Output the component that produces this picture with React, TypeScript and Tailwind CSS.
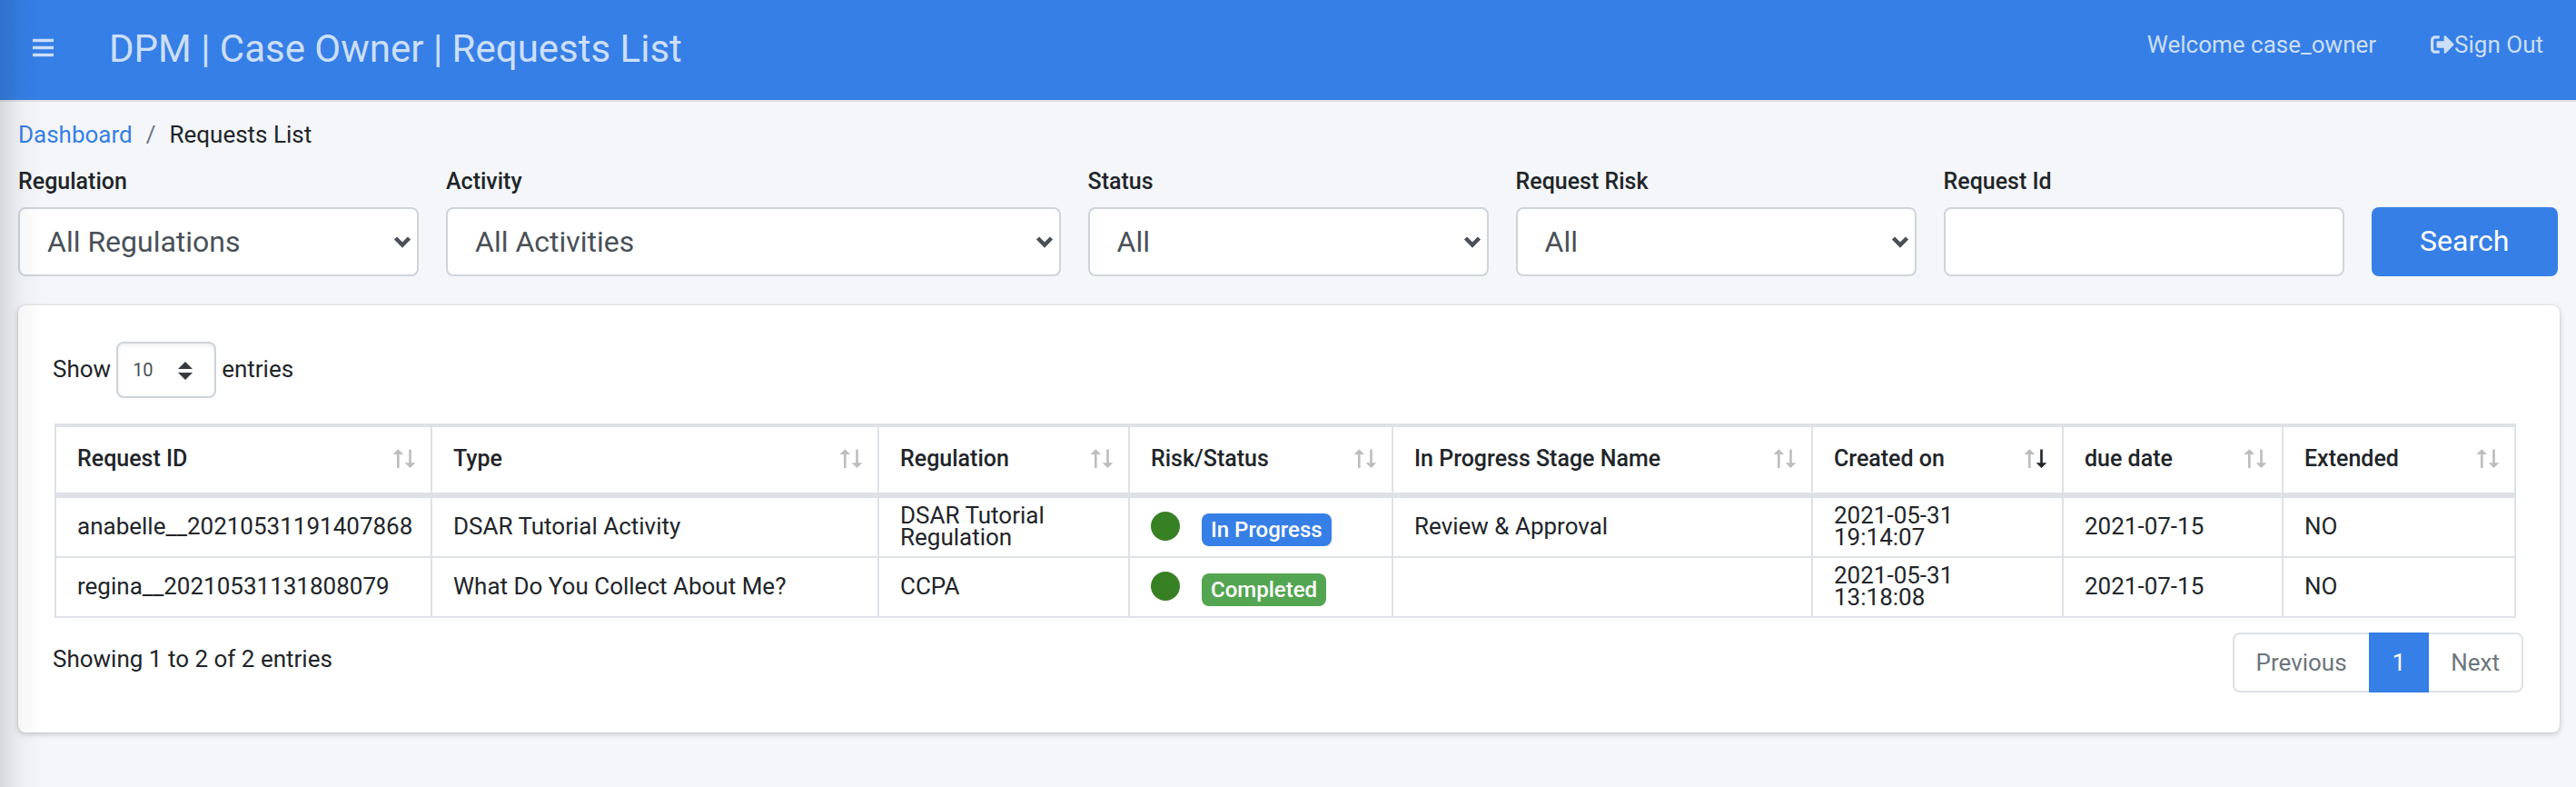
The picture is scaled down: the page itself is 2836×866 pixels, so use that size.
import { FaSignOutAlt } from "react-icons/fa";

const regulations = ["All Regulations", "CCPA", "DSAR Tutorial Regulation"];
const activities = ["All Activities", "DSAR Tutorial Activity", "What Do You Collect About Me?"];
const statuses = ["All", "In Progress", "Completed"];
const risks = ["All", "Low", "Medium", "High"];

type Column = { title: string; width: string; sorted?: boolean };

const columns: Column[] = [
  { title: "Request ID", width: "w-[414px]" },
  { title: "Type", width: "w-[492px]" },
  { title: "Regulation", width: "w-[276px]" },
  { title: "Risk/Status", width: "w-[290px]" },
  { title: "In Progress Stage Name", width: "w-[462px]" },
  { title: "Created on", width: "w-[276px]", sorted: true },
  { title: "due date", width: "w-[242px]" },
  { title: "Extended", width: "w-[256px]" },
];

const requests = [
  {
    id: "anabelle__20210531191407868",
    type: "DSAR Tutorial Activity",
    regulation: "DSAR Tutorial Regulation",
    status: "In Progress",
    stage: "Review & Approval",
    created: "2021-05-31 19:14:07",
    due: "2021-07-15",
    extended: "NO",
  },
  {
    id: "regina__20210531131808079",
    type: "What Do You Collect About Me?",
    regulation: "CCPA",
    status: "Completed",
    stage: "",
    created: "2021-05-31 13:18:08",
    due: "2021-07-15",
    extended: "NO",
  },
];

function MenuIcon() {
  return (
    <svg viewBox="0 0 24 22" className="h-[22px] w-6 fill-current" aria-hidden="true">
      <rect x="0" y="0.8" width="23" height="3.4" />
      <rect x="0" y="8.8" width="23" height="3.4" />
      <rect x="0" y="16.8" width="23" height="3.4" />
    </svg>
  );
}

function SortIcon({ descending = false }: { descending?: boolean }) {
  return (
    <svg viewBox="0 0 26 22" className="h-[22px] w-[26px]" aria-hidden="true">
      <path d="M5 21V6H0.5L6.3 0.3L12.1 6H7.6V21Z" className="fill-[#bcbdbe]" />
      <path
        d="M18.2 0.5V15.2H13.7L19.5 21L25.3 15.2H20.8V0.5Z"
        className={descending ? "fill-[#212529]" : "fill-[#bcbdbe]"}
      />
    </svg>
  );
}

function FilterSelect({ id, label, options, span }: { id: string; label: string; options: string[]; span: string }) {
  return (
    <div className={`${span} flex flex-col gap-2`}>
      <label htmlFor={id} className="text-[25px] leading-[40px] font-medium">
        {label}
      </label>
      <div className="relative">
        <select
          id={id}
          className="h-[76px] w-full appearance-none rounded-lg border-2 border-[#ced4da] bg-white pl-[30px] pr-12 text-[32px] text-[#495057]"
        >
          {options.map((option) => (
            <option key={option}>{option}</option>
          ))}
        </select>
        <svg
          viewBox="0 0 20 13"
          className="pointer-events-none absolute right-2 top-8 h-[13px] w-5 fill-none stroke-[#495057] stroke-[4.5]"
          aria-hidden="true"
        >
          <path d="M2.5 2L10 9.5L17.5 2" />
        </svg>
      </div>
    </div>
  );
}

export default function App() {
  return (
    <div className="relative min-h-screen bg-[#f4f6f9] font-[Roboto,sans-serif] text-[26px] text-[#212529]">
      <header className="flex h-28 items-center border-b-2 border-[#dee2e6] bg-[#367fe6] px-9 text-white/75">
        <button type="button" aria-label="Toggle menu" className="pb-1">
          <MenuIcon />
        </button>
        <h1 className="ml-[60px] pb-1 text-[42px]">DPM | Case Owner | Requests List</h1>
        <div className="ml-auto flex items-center gap-[60px] pb-3">
          <span>Welcome case_owner</span>
          <a href="#signout" className="flex items-center">
            <FaSignOutAlt />
            Sign Out
          </a>
        </div>
      </header>

      <main className="px-5">
        <nav aria-label="Breadcrumb" className="pt-4">
          <ol className="flex leading-[40px]">
            <li>
              <a href="#dashboard" className="text-[#367fe6]">
                Dashboard
              </a>
            </li>
            <li aria-hidden="true" className="px-[15px] text-[#6c757d]">
              /
            </li>
            <li aria-current="page">Requests List</li>
          </ol>
        </nav>

        <form className="grid grid-cols-12 items-end gap-x-[30px] pt-3" onSubmit={(event) => event.preventDefault()}>
          <FilterSelect id="regulation" label="Regulation" options={regulations} span="col-span-2" />
          <FilterSelect id="activity" label="Activity" options={activities} span="col-span-3" />
          <FilterSelect id="status" label="Status" options={statuses} span="col-span-2" />
          <FilterSelect id="risk" label="Request Risk" options={risks} span="col-span-2" />
          <div className="col-span-2 flex flex-col gap-2">
            <label htmlFor="request-id" className="text-[25px] leading-[40px] font-medium">
              Request Id
            </label>
            <input
              id="request-id"
              type="text"
              className="h-[76px] w-full rounded-lg border-2 border-[#ced4da] bg-white px-[30px] text-[32px] text-[#495057]"
            />
          </div>
          <button type="submit" className="h-[76px] rounded-lg bg-[#367fe6] pb-0.5 text-[32px] text-white">
            Search
          </button>
        </form>

        <section className="-mr-0.5 mt-8 rounded-lg bg-white pb-11 pl-[38px] pr-10 pt-10 shadow-[0_0_2px_rgba(0,0,0,0.13),0_2px_6px_rgba(0,0,0,0.2)]">
          <div className="flex items-center">
            <label htmlFor="page-size" className="pb-0.5">
              Show
            </label>
            <div className="relative mx-1.5">
              <select
                id="page-size"
                className="h-[62px] w-[110px] appearance-none rounded-lg border-2 border-[#ced4da] bg-white pl-4 text-[20px] text-[#495057] shadow-[inset_0_2px_4px_rgba(0,0,0,0.08)]"
              >
                <option>10</option>
                <option>25</option>
                <option>50</option>
              </select>
              <svg
                viewBox="0 0 16 20"
                className="pointer-events-none absolute right-[26px] top-[22px] h-5 w-4 fill-[#343a40]"
                aria-hidden="true"
              >
                <path d="M8 0L16 8H0Z" />
                <path d="M8 20L0 12H16Z" />
              </svg>
            </div>
            <span className="pb-0.5">entries</span>
          </div>

          <div className="pl-0.5 pr-2">
            <table className="mt-7 w-full table-fixed border-separate border-spacing-0 border-l-2 border-t-2 border-[#dee2e6]">
              <thead>
                <tr>
                  {columns.map((column) => (
                    <th
                      key={column.title}
                      scope="col"
                      aria-sort={column.sorted ? "descending" : undefined}
                      className={`${column.width} h-20 border-b-[6px] border-r-2 border-t-2 border-[#dee2e6] py-0 pl-[23px] pr-4 text-left text-[25px] font-medium`}
                    >
                      <button type="button" className="flex w-full items-center justify-between pb-0.5">
                        {column.title}
                        <SortIcon descending={column.sorted} />
                      </button>
                    </th>
                  ))}
                </tr>
              </thead>
              <tbody className="leading-6 [&_td]:h-[66px] [&_td]:border-b-2 [&_td]:border-r-2 [&_td]:border-[#dee2e6] [&_td]:pt-0 [&_td]:pb-0.5 [&_td]:pl-[23px] [&_td]:pr-6">
                {requests.map((request) => (
                  <tr key={request.id}>
                    <td>{request.id}</td>
                    <td>{request.type}</td>
                    <td>{request.regulation}</td>
                    <td>
                      <div className="flex items-center gap-6">
                        <span role="img" aria-label="Low risk" className="size-8 rounded-full bg-[#388024]" />
                        <span
                          className={`${
                            request.status === "Completed" ? "bg-[#54a551]" : "bg-[#367fe6]"
                          } mt-2 rounded-lg px-[10px] py-[6px] text-[24px] font-medium text-white`}
                        >
                          {request.status}
                        </span>
                      </div>
                    </td>
                    <td>{request.stage}</td>
                    <td>{request.created}</td>
                    <td>{request.due}</td>
                    <td>{request.extended}</td>
                  </tr>
                ))}
              </tbody>
            </table>
          </div>

          <div className="flex items-start justify-between pt-4">
            <p className="pt-2.5">Showing 1 to 2 of 2 entries</p>
            <nav aria-label="Table pages" className="flex h-[66px] items-stretch text-[#6c757d]">
              <button type="button" className="rounded-l-lg border-2 border-r-0 border-[#dee2e6] px-6">
                Previous
              </button>
              <button type="button" aria-current="page" className="bg-[#367fe6] px-[26px] text-white">
                1
              </button>
              <button type="button" className="rounded-r-lg border-2 border-l-0 border-[#dee2e6] px-6">
                Next
              </button>
            </nav>
          </div>
        </section>
      </main>

      <div
        aria-hidden="true"
        className="pointer-events-none absolute inset-y-0 left-0 w-12 bg-linear-to-r from-black/12 via-black/3 to-transparent"
      />
    </div>
  );
}
